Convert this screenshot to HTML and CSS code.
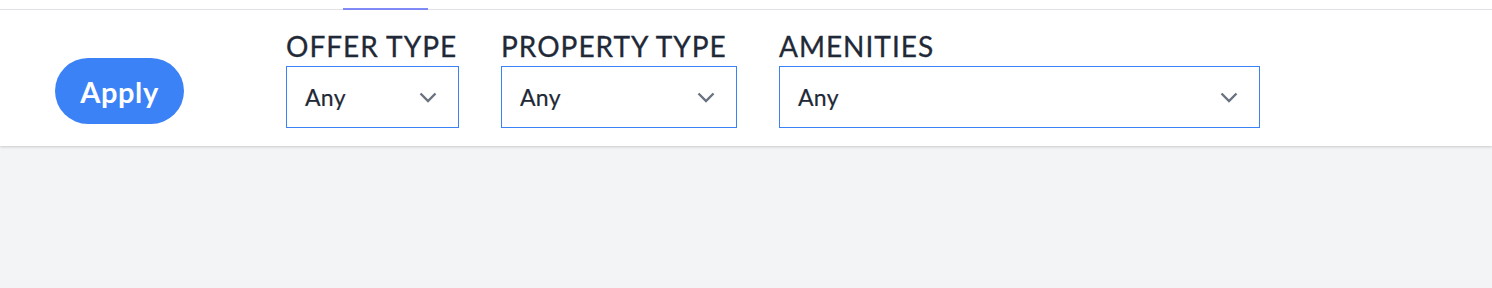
FILE: index.html
```html
<!DOCTYPE html>
<html lang="en">
<head>
<meta charset="utf-8">
<title>Filters</title>
<link rel="stylesheet" href="styles.css">
</head>
<body>
<div class="tabs">
  <div class="tab-indicator"></div>
</div>
<div class="panel">
  <button class="apply">Apply</button>
  <div class="filters">
    <div class="filter filter-offer">
      <div class="label">OFFER TYPE</div>
      <div class="select">
        <span class="value">Any</span>
        <svg class="chev" width="18" height="11" viewBox="0 0 18 11"><path d="M1.5 1.5 9 9l7.5-7.5" fill="none" stroke="#6b7280" stroke-width="2.4"/></svg>
      </div>
    </div>
    <div class="filter filter-property">
      <div class="label">PROPERTY TYPE</div>
      <div class="select">
        <span class="value">Any</span>
        <svg class="chev" width="18" height="11" viewBox="0 0 18 11"><path d="M1.5 1.5 9 9l7.5-7.5" fill="none" stroke="#6b7280" stroke-width="2.4"/></svg>
      </div>
    </div>
    <div class="filter filter-amenities">
      <div class="label">AMENITIES</div>
      <div class="select">
        <span class="value">Any</span>
        <svg class="chev" width="18" height="11" viewBox="0 0 18 11"><path d="M1.5 1.5 9 9l7.5-7.5" fill="none" stroke="#6b7280" stroke-width="2.4"/></svg>
      </div>
    </div>
  </div>
</div>
</body>
</html>
```

FILE: styles.css
```css
* { box-sizing: border-box; }
html, body { margin: 0; padding: 0; }
body {
  background: #f3f4f6;
  font-family: Lato, "Noto Sans", sans-serif;
  color: #1f2937;
  height: 288px;
  overflow: hidden;
}
.tabs {
  height: 10px;
  background: #fff;
  border-bottom: 1px solid #e5e7eb;
  display: flex;
  align-items: flex-end;
}
.tab-indicator {
  margin-left: 343px;
  width: 85px;
  height: 2px;
  background: #818cf8;
  margin-bottom: -1px;
}
.panel {
  background: #fff;
  height: 136px;
  display: flex;
  align-items: flex-start;
  padding-left: 55px;
  box-shadow: 0 1px 3px rgba(0,0,0,0.12), 0 1px 2px rgba(0,0,0,0.06);
  position: relative;
}
.apply {
  margin-top: 48px;
  width: 129px;
  height: 66px;
  border: none;
  border-radius: 33px;
  background: #3b82f6;
  color: #fff;
  font-family: inherit;
  font-size: 29px;
  font-weight: 700;
  letter-spacing: 0.6px;
  padding: 0;
  cursor: pointer;
}
.filters {
  display: flex;
  gap: 42px;
  margin-left: 102px;
  margin-top: 20px;
}
.filter { display: flex; flex-direction: column; }
.label {
  height: 36px;
  line-height: 32px;
  font-size: 28px;
  letter-spacing: 1px;
  color: #1f2937;
  white-space: nowrap;
  -webkit-text-stroke: 0.3px #1f2937;
}
.select {
  height: 62px;
  border: 1px solid #3b82f6;
  display: flex;
  align-items: center;
  justify-content: space-between;
  padding: 0 21px 0 18px;
}
.value { font-size: 23px; letter-spacing: 0.3px; color: #1f2937; -webkit-text-stroke: 0.2px #1f2937; }
.chev { display: block; }
.filter-offer .select { width: 173px; }
.filter-property .select { width: 236px; }
.filter-amenities .select { width: 481px; }
```
